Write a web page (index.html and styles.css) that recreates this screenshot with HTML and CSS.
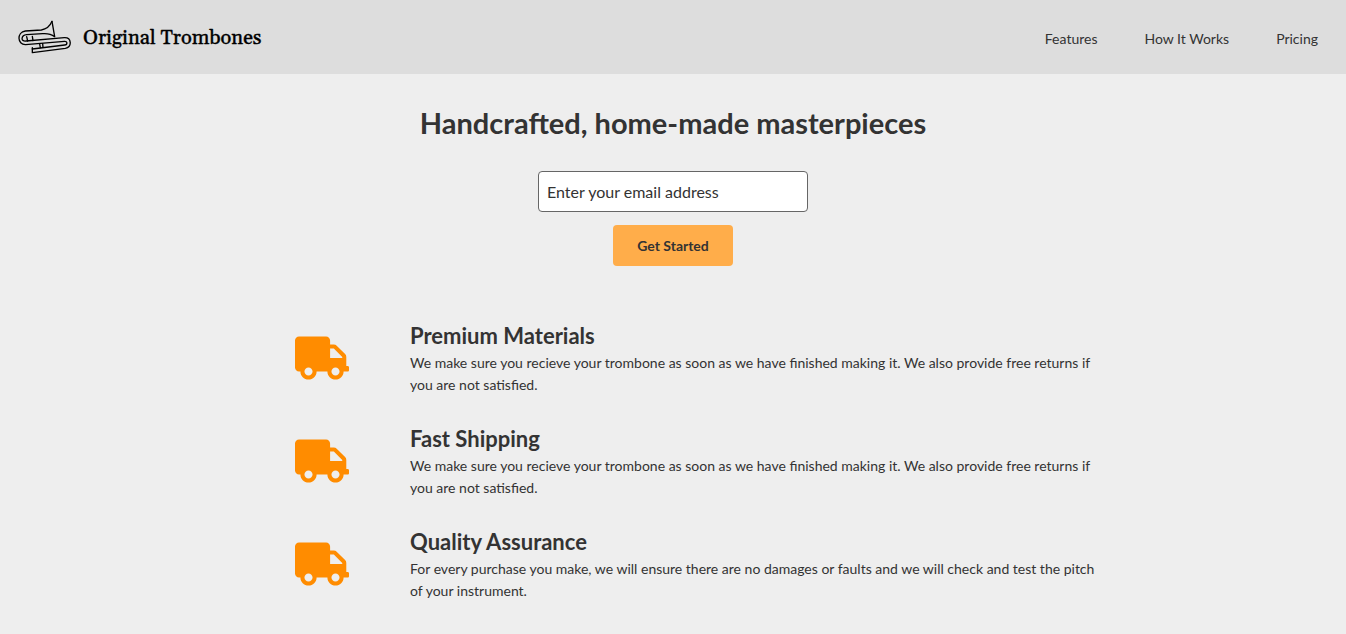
FILE: index.html
```html
<!DOCTYPE html>
<html lang="en">
<head>
<meta charset="utf-8">
<meta name="viewport" content="width=device-width, initial-scale=1">
<title>Original Trombones</title>
<link rel="stylesheet" href="styles.css">
</head>
<body>
<svg class="sprite" aria-hidden="true">
  <symbol id="truck" viewBox="0 0 640 512">
    <path d="M624 352h-16V243.9c0-12.7-5.1-24.9-14.1-33.9L494 110.1c-9-9-21.2-14.1-33.9-14.1H416V48c0-26.5-21.5-48-48-48H48C21.5 0 0 21.5 0 48v320c0 26.5 21.5 48 48 48h16c0 53 43 96 96 96s96-43 96-96h128c0 53 43 96 96 96s96-43 96-96h48c8.8 0 16-7.2 16-16v-32c0-8.8-7.2-16-16-16zM160 464c-26.5 0-48-21.5-48-48s21.5-48 48-48 48 21.5 48 48-21.5 48-48 48zm320 0c-26.5 0-48-21.5-48-48s21.5-48 48-48 48 21.5 48 48-21.5 48-48 48zm80-208H416V144h44.1l99.9 99.9V256z"/>
  </symbol>
</svg>
<header class="header">
  <a class="brand" href="#">
    <svg class="brand-icon" viewBox="24 16 159 102" aria-hidden="true">
      <path d="M126 20L134 66C122 57 110 56 98 57L50 60C33 62 31 81 48 79L163 69C185 68 187 97 166 101L67 114V99"/>
      <path d="M126 20C118 39 108 44 94 46L46 49C20 52 21 91 47 90L163 80C173 79 173 90 164 91L67 103"/>
      <path d="M50 66L53 79M67 65L69 78M89 88L91 99M98 87L99 98"/>
    </svg>
    <span>Original Trombones</span>
  </a>
  <nav class="nav" aria-label="Main">
    <a href="#features">Features</a>
    <a href="#how-it-works">How It Works</a>
    <a href="#pricing">Pricing</a>
  </nav>
</header>
<main>
  <section class="hero">
    <h1>Handcrafted, home-made masterpieces</h1>
    <form class="signup">
      <input type="email" placeholder="Enter your email address" aria-label="Email address">
      <button type="submit">Get Started</button>
    </form>
  </section>
  <section class="features" id="features">
    <article class="feature">
      <svg class="feature-icon" aria-hidden="true"><use href="#truck"/></svg>
      <div>
        <h2>Premium Materials</h2>
        <p>We make sure you recieve your trombone as soon as we have finished making it. We also provide free returns if you are not satisfied.</p>
      </div>
    </article>
    <article class="feature">
      <svg class="feature-icon" aria-hidden="true"><use href="#truck"/></svg>
      <div>
        <h2>Fast Shipping</h2>
        <p>We make sure you recieve your trombone as soon as we have finished making it. We also provide free returns if you are not satisfied.</p>
      </div>
    </article>
    <article class="feature">
      <svg class="feature-icon" aria-hidden="true"><use href="#truck"/></svg>
      <div>
        <h2>Quality Assurance</h2>
        <p>For every purchase you make, we will ensure there are no damages or faults and we will check and test the pitch of your instrument.</p>
      </div>
    </article>
  </section>
</main>
</body>
</html>
```
FILE: styles.css
```css
* {
  box-sizing: border-box;
}

body {
  margin: 0;
  background: #eee;
  color: #333;
  font-family: Lato, sans-serif;
  font-size: 14px;
  line-height: 22px;
}

h1,
h2,
p {
  margin: 0;
}

.sprite {
  display: none;
}

.header {
  display: flex;
  align-items: center;
  justify-content: space-between;
  padding: 18px 28px 16px 18px;
  background: #ddd;
}

.brand {
  display: flex;
  align-items: center;
  gap: 12px;
  color: #000;
  font-family: Georgia, Gelasio, "Liberation Serif", serif;
  font-size: 20px;
  line-height: 40px;
  text-decoration: none;
  -webkit-text-stroke: 0.4px #000;
}

.brand-icon {
  width: 53px;
  height: 34px;
  margin-bottom: 2px;
  fill: none;
  stroke: #000;
  stroke-width: 4;
  stroke-linejoin: round;
  stroke-linecap: round;
}

.nav {
  display: flex;
  gap: 47px;
  padding-top: 2px;
}

.nav a {
  color: inherit;
  text-decoration: none;
}

.hero {
  display: flex;
  flex-direction: column;
  align-items: center;
  gap: 30px;
  padding-top: 30px;
}

h1 {
  font-size: 29px;
  font-weight: 700;
  line-height: 37px;
  text-align: center;
}

.signup {
  display: flex;
  flex-direction: column;
  align-items: center;
  gap: 13px;
}

.signup input {
  width: 270px;
  height: 41px;
  padding: 0 8px;
  border: 1px solid #666;
  border-radius: 4px;
  background: #fff;
  color: #333;
  font: 16px Lato, sans-serif;
}

.signup input::placeholder {
  color: #333;
  opacity: 1;
}

.signup button {
  height: 41px;
  padding: 0 24px;
  border: 0;
  border-radius: 4px;
  background: #ffad4a;
  color: #333;
  font: 700 14px Lato, sans-serif;
}

.features {
  display: flex;
  flex-direction: column;
  gap: 28px;
  max-width: 864px;
  margin: 0 auto;
  padding: 55px 0 32px 54px;
}

.feature {
  display: grid;
  grid-template-columns: 54px 1fr;
  align-items: center;
  gap: 61px;
}

.feature-icon {
  width: 54px;
  height: 44px;
  margin-bottom: 2px;
  fill: #ff8c00;
}

h2 {
  padding-bottom: 2px;
  font-size: 22px;
  font-weight: 700;
  line-height: 29px;
}
```
